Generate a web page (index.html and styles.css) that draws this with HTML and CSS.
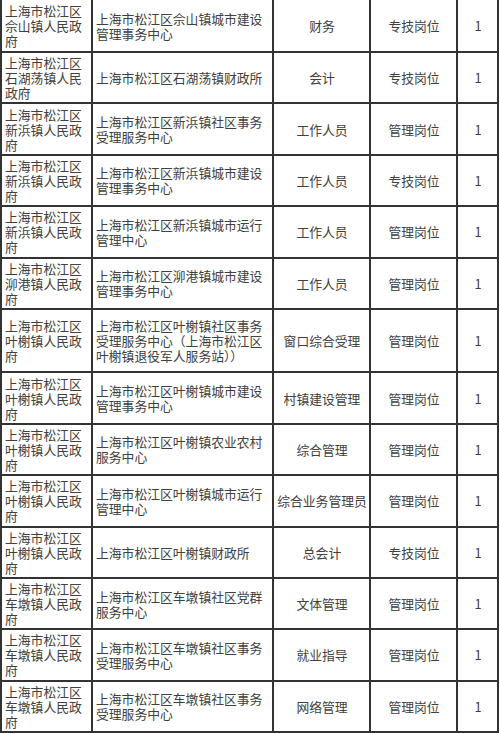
FILE: index.html
```html
<!DOCTYPE html>
<html lang="zh-CN">
<head>
<meta charset="utf-8">
<link rel="stylesheet" href="styles.css">
</head>
<body>
<table class="grid">
<colgroup>
<col class="c1"><col class="c2"><col class="c3"><col class="c4"><col class="c5">
</colgroup>
<tbody>
<tr class="first"><td class="l">上海市松江区佘山镇人民政府</td><td class="l">上海市松江区佘山镇城市建设管理事务中心</td><td>财务</td><td>专技岗位</td><td>1</td></tr>
<tr><td class="l">上海市松江区石湖荡镇人民政府</td><td class="l">上海市松江区石湖荡镇财政所</td><td>会计</td><td>专技岗位</td><td>1</td></tr>
<tr><td class="l">上海市松江区新浜镇人民政府</td><td class="l">上海市松江区新浜镇社区事务受理服务中心</td><td>工作人员</td><td>管理岗位</td><td>1</td></tr>
<tr><td class="l">上海市松江区新浜镇人民政府</td><td class="l">上海市松江区新浜镇城市建设管理事务中心</td><td>工作人员</td><td>专技岗位</td><td>1</td></tr>
<tr><td class="l">上海市松江区新浜镇人民政府</td><td class="l">上海市松江区新浜镇城市运行管理中心</td><td>工作人员</td><td>管理岗位</td><td>1</td></tr>
<tr><td class="l">上海市松江区泖港镇人民政府</td><td class="l">上海市松江区泖港镇城市建设管理事务中心</td><td>工作人员</td><td>管理岗位</td><td>1</td></tr>
<tr class="tall"><td class="l">上海市松江区叶榭镇人民政府</td><td class="l">上海市松江区叶榭镇社区事务受理服务中心（上海市松江区叶榭镇退役军人服务站））</td><td>窗口综合受理</td><td>管理岗位</td><td>1</td></tr>
<tr><td class="l">上海市松江区叶榭镇人民政府</td><td class="l">上海市松江区叶榭镇城市建设管理事务中心</td><td>村镇建设管理</td><td>管理岗位</td><td>1</td></tr>
<tr><td class="l">上海市松江区叶榭镇人民政府</td><td class="l">上海市松江区叶榭镇农业农村服务中心</td><td>综合管理</td><td>管理岗位</td><td>1</td></tr>
<tr><td class="l">上海市松江区叶榭镇人民政府</td><td class="l">上海市松江区叶榭镇城市运行管理中心</td><td>综合业务管理员</td><td>管理岗位</td><td>1</td></tr>
<tr><td class="l">上海市松江区叶榭镇人民政府</td><td class="l">上海市松江区叶榭镇财政所</td><td>总会计</td><td>专技岗位</td><td>1</td></tr>
<tr><td class="l">上海市松江区车墩镇人民政府</td><td class="l">上海市松江区车墩镇社区党群服务中心</td><td>文体管理</td><td>管理岗位</td><td>1</td></tr>
<tr><td class="l">上海市松江区车墩镇人民政府</td><td class="l">上海市松江区车墩镇社区事务受理服务中心</td><td>就业指导</td><td>管理岗位</td><td>1</td></tr>
<tr><td class="l">上海市松江区车墩镇人民政府</td><td class="l">上海市松江区车墩镇社区事务受理服务中心</td><td>网络管理</td><td>管理岗位</td><td>1</td></tr>
</tbody>
</table>
</body>
</html>
```

FILE: styles.css
```css
html, body {
  margin: 0;
  padding: 0;
  background: #ffffff;
}
body {
  width: 500px;
  height: 734px;
  overflow: hidden;
  font-family: "Noto Sans CJK SC", "Noto Sans", sans-serif;
  font-size: 12.8px;
  color: #404040;
}
.grid {
  border-collapse: collapse;
  table-layout: fixed;
  width: 499px;
  margin-top: -2px;
}
.c1 { width: 91px; }
.c2 { width: 181px; }
.c3 { width: 97px; }
.c4 { width: 87px; }
.c5 { width: 41px; }
.grid td {
  border: 2px solid #333333;
  padding: 0 2px 0 3px;
  height: 51.4px;
  box-sizing: border-box;
  line-height: 15px;
  text-align: center;
  vertical-align: middle;
  word-break: break-all;
}
.grid td.l {
  text-align: left;
}
.grid tr.first td {
  height: 53px;
}
.grid tr.tall td {
  height: 63.4px;
}
```
